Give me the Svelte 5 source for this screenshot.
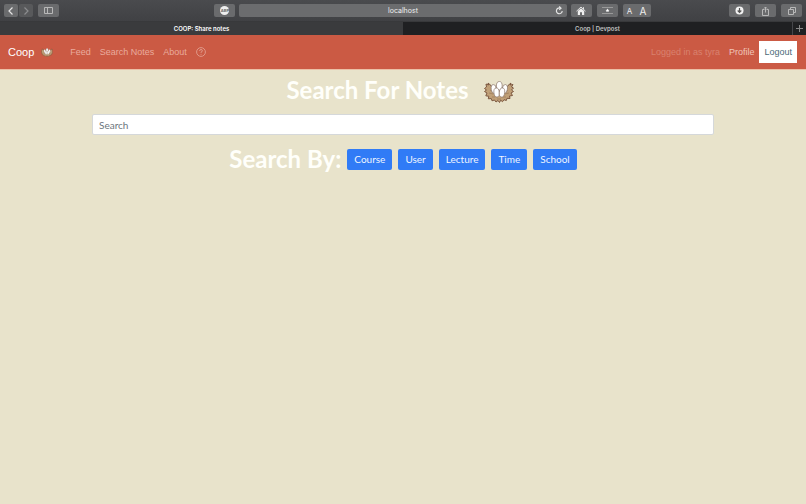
<script lang="ts">
	let query = $state('');
	const filters = ['Course', 'User', 'Lecture', 'Time', 'School'];
</script>

<svelte:head>
	<title>COOP: Share notes</title>
</svelte:head>

{#snippet nest()}
	<path d="M2 3 4.500 4 4 2 7 4.500 9 8h13l2-3.500L27 2l-.7 2L29 3.500 27.500 6 29.500 7 27.500 9l2 1.500-2.500 1.500 1.500 2.500-3 .5.5 2.500-3-.2-.7 2.200-2.300-.8-1.500 2-1.800-1.500L15.500 21.500l-1.500-2-2 1.500-1.500-2-2.500.8-.7-2.200-3 .2.5-2.500-3-.5L3 12 .5 10.500l2-1.500-2-1.500L2.500 6z" fill="#c0a078" stroke="#7c5840" stroke-width="1" stroke-linejoin="round" />
	<path d="m6 9 3 2M5 12l4 1M8 16l3 0M24 9l-3 2M25 12l-4 1M22 16h-3M13 18h4" stroke="#967452" stroke-width=".6" />
	<g fill="#fff" stroke="#8b766a" stroke-width=".7">
		<ellipse cx="9.800" cy="8" rx="2.600" ry="4.500" transform="rotate(-8 9.800 8)" />
		<ellipse cx="20.800" cy="8" rx="2.600" ry="4.500" transform="rotate(8 20.800 8)" />
		<ellipse cx="15.300" cy="5" rx="2.900" ry="4.500" />
		<ellipse cx="12.600" cy="11.500" rx="2.700" ry="4.600" transform="rotate(-6 12.600 11.500)" />
		<ellipse cx="18" cy="11.500" rx="2.700" ry="4.600" transform="rotate(6 18 11.500)" />
	</g>
{/snippet}

<div class="browser">
	<div class="toolbar">
		<div class="group">
			<div class="pair">
				<button class="tool small" aria-label="Back"><svg width="8" height="10" viewBox="0 0 8 10"><path d="M5.5 1.5 2 5l3.5 3.5" /></svg></button>
				<button class="tool small dim" aria-label="Forward"><svg width="8" height="10" viewBox="0 0 8 10"><path d="M2.5 1.5 6 5 2.5 8.5" /></svg></button>
			</div>
			<button class="tool" aria-label="Sidebar"><svg class="thin" width="9" height="7" viewBox="0 0 9 7"><path d="M.5.5h8v6h-8zM3.500.5v6" /></svg></button>
			<button class="tool push" aria-label="Ad blocker"><span class="abp">ABP</span></button>
		</div>
		<div class="address">
			<span>localhost</span>
			<button class="reload" aria-label="Reload"><svg width="9" height="9" viewBox="0 0 9 9"><path d="M7.200 5a2.900 2.900 0 1 1-1.500-2.700M4.200.5 6 2.300 4.200 3.800" /></svg></button>
		</div>
		<div class="group">
			<button class="tool" aria-label="Home"><svg width="10" height="10" viewBox="0 0 10 10"><path d="M5 1 9.500 5.200M5 1 .5 5.200M7.500 1.200v2" stroke="#eee" stroke-width=".9" /><path d="M1.800 5 5 2.200 8.200 5v4H6V6.200H4V9H1.800z" fill="#eee" stroke="none" /></svg></button>
			<button class="tool" aria-label="Top sites"><svg class="thin" width="11" height="7" viewBox="0 0 11 7"><path d="M0 .5h11M0 6.500h11" stroke="#999" /><path d="m5.500 1.500.6 1.200 1.300.2-.9.9.2 1.300-1.200-.6-1.200.6.2-1.300-.9-.9 1.300-.2z" fill="#fff" stroke="none" /></svg></button>
			<div class="tool letters"><button aria-label="Smaller text">A</button><button class="big" aria-label="Larger text">A</button></div>
			<button class="tool push" aria-label="Downloads"><svg width="9" height="9" viewBox="0 0 9 9"><circle cx="4.500" cy="4.500" r="4" fill="#f2f2f2" stroke="none" /><path d="M4.500 2v4M2.700 4.500l1.800 1.800 1.800-1.800" stroke="#555" /></svg></button>
			<button class="tool" aria-label="Share"><svg class="thin" width="8" height="10" viewBox="0 0 8 10"><path d="M2.500 3.500h-2v6h6v-6h-2M3.500 6.500V1M2 2.500 3.500 1 5 2.500" /></svg></button>
			<button class="tool" aria-label="Tabs"><svg class="thin" width="8" height="8" viewBox="0 0 8 8"><path d="M2.500 2.500v-2h5v5h-2M.5 2.500h5v5h-5z" /></svg></button>
		</div>
	</div>
	<div class="tabs">
		<button class="tab active">COOP: Share notes</button>
		<button class="tab">Coop | Devpost</button>
		<button class="plus" aria-label="New tab"><svg class="thin" width="7" height="7" viewBox="0 0 7 7"><path d="M3.500 0v7M0 3.500h7" stroke="#888" /></svg></button>
	</div>
</div>

<nav>
	<a class="brand" href="#home">Coop <svg width="12" height="9" viewBox="0 0 30 22">{@render nest()}</svg></a>
	<a href="#feed">Feed</a>
	<a href="#search">Search Notes</a>
	<a href="#about">About</a>
	<a class="help" href="#help" aria-label="Help"><svg width="10" height="10" viewBox="0 0 10 10"><circle cx="5" cy="5" r="4.400" /><path d="M3.600 4q0-1.500 1.400-1.500T6.400 3.800Q6.400 4.600 5 5.200v.7M5 6.900v.8" /></svg></a>
	<span class="user">Logged in as tyra</span>
	<a href="#profile" class="profile">Profile</a>
	<button class="logout">Logout</button>
</nav>

<main>
	<h1>Search For Notes <svg width="30" height="22" viewBox="0 0 30 22">{@render nest()}</svg></h1>
	<input type="text" placeholder="Search" aria-label="Search" bind:value={query} />
	<div class="filters">
		<h2>Search By:</h2>
		{#each filters as filter}
			<button class="filter">{filter}</button>
		{/each}
	</div>
</main>

<style>
	:global(body) { background: #e8e3cb; }
	button { border: 0; padding: 0; background: none; font: inherit; color: inherit; cursor: pointer; }
	a { color: inherit; text-decoration: none; }
	svg { display: block; flex: none; fill: none; stroke: #e4e4e4; stroke-width: 1.2; }
	svg.thin { stroke: #b8b8b8; stroke-width: 1; }

	.browser { font-family: Inter, "Liberation Sans", sans-serif; color: #eee; }
	.toolbar { display: grid; grid-template-columns: 1fr 41% 1fr; gap: 4px; padding: 4px; background: linear-gradient(#4a4b4e, #404144); }
	.group { display: flex; gap: 5px; }
	.pair { display: flex; gap: 1px; }
	.tool { display: flex; align-items: center; justify-content: center; width: 21px; height: 13px; border-radius: 2px; background: #6a6b6d; }
	.tool.small { width: 14px; }
	.tool.dim { background: #58595b; }
	.dim svg { stroke: #8c8d8f; }
	.tool.push { margin-left: auto; }
	.abp { display: flex; align-items: center; justify-content: center; width: 9px; height: 9px; border-radius: 50%; background: #eee; color: #666; font-size: 4px; font-weight: 700; }
	.address { display: flex; align-items: center; height: 13px; border-radius: 2px; background: #6b6c6e; font-size: 7px; }
	.address span { flex: 1; padding-left: 12px; text-align: center; }
	.reload { width: 12px; }
	.letters { width: 28px; gap: 7px; font-size: 8px; }
	.letters .big { font-size: 10px; }
	.tabs { display: flex; height: 14px; background: #1f2022; border-top: 1px solid #38393b; box-sizing: border-box; font-size: 6px; font-weight: 600; }
	.tab { flex: 1; color: #c0c0c0; }
	.tab.active { flex: 1 0 14px; background: #3a3b3d; color: #fff; }
	.plus { display: flex; align-items: center; justify-content: center; width: 14px; border-left: 1px solid #45464a; box-sizing: border-box; }

	nav { display: flex; align-items: center; gap: 9px; padding: 6px 9px 6px 8px; background: #cb5a44; border-bottom: 1px solid #ecc0a6; color: #e9ab9d; font: 9px/20px "Liberation Sans", Arial, sans-serif; }
	.brand { display: flex; align-items: center; gap: 7px; margin-right: 8px; color: #fff; font-size: 11px; }
	.help svg { stroke: #e5a799; stroke-width: 0.8; }
	.user { margin-left: auto; color: #d9826f; }
	.profile { color: #f0c6bb; }
	.logout { height: 22px; padding: 0 5px; margin-left: -4px; background: #fff; color: #4b6a78; }

	main { padding: 7px 92px; font-family: Lato, "Open Sans", sans-serif; }
	h1, h2 { margin: 0; color: #fffffa; font-size: 24px; line-height: 26px; font-weight: 700; }
	h1 { display: flex; justify-content: center; align-items: flex-end; gap: 15px; padding-right: 6px; margin-bottom: 11px; }
	input { display: block; width: 100%; height: 21px; padding: 0 6px; box-sizing: border-box; border: 1px solid #d5d8da; border-radius: 2px; background: #fff; font: 10px Lato, sans-serif; color: #495057; }
	input::placeholder { color: #6c757d; opacity: 1; }
	.filters { display: flex; justify-content: center; align-items: center; gap: 6px; margin-top: 11px; }
	.filter { height: 21px; padding: 0 7px; border-radius: 2px; background: #307bf6; color: #eef5ff; font-size: 10px; }
</style>
